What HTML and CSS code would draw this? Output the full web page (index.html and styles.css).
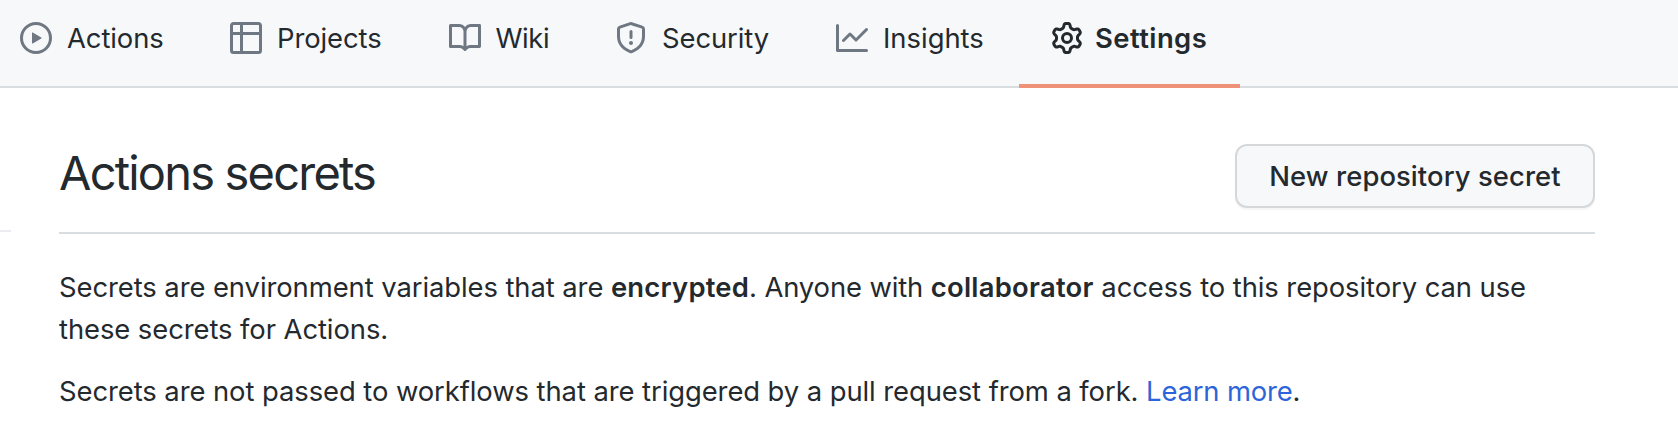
FILE: index.html
```html
<!DOCTYPE html>
<html lang="en">
<head>
<meta charset="utf-8">
<title>Actions secrets</title>
<link rel="stylesheet" href="styles.css">
</head>
<body>
<nav class="tabs">
  <a class="tab tab-actions"><svg class="icon" viewBox="0 0 16 16"><path fill-rule="evenodd" d="M1.5 8a6.5 6.5 0 1113 0 6.5 6.5 0 01-13 0zM8 0a8 8 0 100 16A8 8 0 008 0zM6.379 5.227A.25.25 0 006 5.442v5.117a.25.25 0 00.379.214l4.264-2.559a.25.25 0 000-.428L6.379 5.227z"/></svg><span>Actions</span></a>
  <a class="tab tab-projects"><svg class="icon" viewBox="0 0 16 16"><path fill-rule="evenodd" d="M0 1.75C0 .784.784 0 1.75 0h12.5C15.216 0 16 .784 16 1.75v12.5A1.75 1.75 0 0114.25 16H1.75A1.75 1.75 0 010 14.25V1.75zM1.5 6.5v7.75c0 .138.112.25.25.25H5v-8H1.500zM5 5H1.500V1.750a.25.25 0 01.25-.25H5V5zm1.500 1.500v8h7.750a.25.25 0 00.25-.25V6.500h-8zm8-1.500h-8V1.500h7.750a.25.25 0 01.25.25V5z"/></svg><span>Projects</span></a>
  <a class="tab tab-wiki"><svg class="icon" viewBox="0 0 16 16"><path fill-rule="evenodd" d="M0 1.75A.75.75 0 01.75 1h4.253c1.227 0 2.317.59 3 1.501A3.744 3.744 0 0111.006 1h4.245a.75.75 0 01.75.75v10.500a.75.75 0 01-.75.75h-4.507a2.250 2.250 0 00-1.591.659l-.622.621a.75.75 0 01-1.060 0l-.622-.621A2.250 2.250 0 005.258 13H.75a.75.75 0 01-.75-.75V1.750zm8.755 3a2.250 2.250 0 012.250-2.250H14.500v9h-3.757c-.71 0-1.400.201-1.992.572l.004-7.322zm-1.504 7.324l.004-5.073-.002-2.253A2.250 2.250 0 005.003 2.500H1.500v9h3.757a3.750 3.750 0 011.994.574z"/></svg><span>Wiki</span></a>
  <a class="tab tab-security"><svg class="icon" viewBox="0 0 16 16"><path fill-rule="evenodd" d="M7.467.133a1.750 1.750 0 011.066 0l5.250 1.680A1.750 1.750 0 0115 3.480V7c0 1.566-.32 3.182-1.303 4.682-.983 1.498-2.585 2.813-5.032 3.855a1.700 1.700 0 01-1.330 0c-2.447-1.042-4.049-2.357-5.032-3.855C1.320 10.182 1 8.566 1 7V3.480a1.750 1.750 0 011.217-1.667l5.250-1.680zm.61 1.429a.25.25 0 00-.153 0l-5.250 1.680a.25.25 0 00-.174.238V7c0 1.358.275 2.666 1.057 3.860.784 1.194 2.121 2.340 4.366 3.297a.2.2 0 00.154 0c2.245-.956 3.582-2.104 4.366-3.298C13.225 9.666 13.500 8.360 13.500 7V3.480a.25.25 0 00-.174-.237l-5.250-1.680zM9 10.500a1 1 0 11-2 0 1 1 0 012 0zm-.25-5.750a.75.75 0 10-1.500 0v3a.75.75 0 001.500 0v-3z"/></svg><span>Security</span></a>
  <a class="tab tab-insights"><svg class="icon" viewBox="0 0 16 16"><path fill-rule="evenodd" d="M1.500 1.750a.75.75 0 00-1.500 0v12.500c0 .414.336.75.75.75h14.500a.75.75 0 000-1.500H1.500V1.750zm14.280 2.530a.75.75 0 00-1.060-1.060L10 7.940 7.530 5.470a.75.75 0 00-1.060 0L3.220 8.720a.75.75 0 001.060 1.060L7 7.060l2.470 2.470a.75.75 0 001.060 0l5.250-5.250z"/></svg><span>Insights</span></a>
  <a class="tab tab-settings selected"><svg class="icon" viewBox="0 0 16 16"><path fill-rule="evenodd" d="M7.429 1.525a6.593 6.593 0 011.142 0c.036.003.108.036.137.146l.289 1.105c.147.56.55.967.997 1.189.174.086.341.183.501.290.417.278.97.423 1.530.270l1.102-.303c.11-.03.175.016.195.046.219.310.410.641.573.989.014.031.022.110-.059.190l-.815.806c-.411.406-.562.957-.530 1.456a4.588 4.588 0 010 .582c-.032.499.119 1.050.530 1.456l.815.806c.080.080.073.159.059.190a6.494 6.494 0 01-.573.990c-.020.029-.086.074-.195.045l-1.103-.303c-.559-.153-1.112-.008-1.529.270-.160.107-.327.204-.500.290-.449.222-.851.628-.998 1.189l-.289 1.105c-.029.110-.101.143-.137.146a6.613 6.613 0 01-1.142 0c-.036-.003-.108-.037-.137-.146l-.289-1.105c-.147-.560-.550-.967-.997-1.189a4.502 4.502 0 01-.501-.290c-.417-.278-.970-.423-1.530-.270l-1.102.303c-.110.030-.175-.016-.195-.046a6.492 6.492 0 01-.573-.989c-.014-.031-.022-.110.059-.190l.815-.806c.411-.406.562-.957.530-1.456a4.587 4.587 0 010-.582c.032-.499-.119-1.050-.530-1.456l-.815-.806c-.080-.080-.073-.159-.059-.190a6.440 6.440 0 01.573-.990c.020-.029.086-.075.195-.045l1.103.303c.559.153 1.112.008 1.529-.270.160-.107.327-.204.500-.290.449-.222.851-.628.998-1.189l.289-1.105c.029-.110.101-.143.137-.146zM8 0c-.236 0-.470.010-.701.030-.743.065-1.290.615-1.458 1.261l-.290 1.106c-.017.066-.078.158-.211.224a5.994 5.994 0 00-.668.386c-.123.082-.233.090-.300.071L3.270 2.776c-.644-.177-1.392.020-1.820.630a7.977 7.977 0 00-.704 1.217c-.315.675-.111 1.422.363 1.891l.815.806c.050.048.098.147.088.294a6.084 6.084 0 000 .772c.010.147-.038.246-.088.294l-.815.806c-.474.469-.678 1.216-.363 1.891.200.428.436.835.704 1.218.428.609 1.176.806 1.820.630l1.103-.303c.066-.019.176-.011.299.071.213.143.436.272.668.386.133.066.194.158.212.224l.289 1.106c.169.646.715 1.196 1.458 1.260a8.094 8.094 0 001.402 0c.743-.064 1.290-.614 1.458-1.260l.290-1.106c.017-.066.078-.158.211-.224a5.980 5.980 0 00.668-.386c.123-.082.233-.090.300-.071l1.102.302c.644.177 1.392-.020 1.820-.630.268-.382.505-.789.704-1.217.315-.675.111-1.422-.364-1.891l-.814-.806c-.050-.048-.098-.147-.088-.294a6.100 6.100 0 000-.772c-.010-.147.039-.246.088-.294l.814-.806c.475-.469.679-1.216.364-1.891a7.992 7.992 0 00-.704-1.218c-.428-.609-1.176-.806-1.820-.630l-1.103.303c-.066.019-.176.011-.299-.071a5.991 5.991 0 00-.668-.386c-.133-.066-.194-.158-.212-.224L10.160 1.290C9.990.645 9.444.095 8.701.031A8.094 8.094 0 008 0zm1.500 8a1.500 1.500 0 11-3 0 1.500 1.500 0 013 0zM11 8a3 3 0 11-6 0 3 3 0 016 0z"/></svg><span>Settings</span></a>
</nav>
<main class="page">
  <div class="side"></div>
  <section class="content">
    <header class="subhead">
      <h2 class="title">Actions secrets</h2>
      <button class="btn">New repository secret</button>
    </header>
    <p class="para">Secrets are environment variables that are <strong class="encrypted">encrypted</strong><span class="middle">. Anyone with </span><strong class="collaborator">collaborator</strong> access to this repository can use<br>these secrets for Actions.</p>
    <p class="para">Secrets are not passed to workflows that are triggered by a pull request from a fork. <a class="link">Learn more</a>.</p>
  </section>
</main>
</body>
</html>
```
FILE: styles.css
```css
* { box-sizing: border-box; }
body {
  margin: 0;
  height: 446px;
  overflow: hidden;
  background: #fff;
  color: #24292e;
  font: 27.4px/42px Inter, sans-serif;
}
.tabs {
  display: flex;
  height: 88px;
  background: #f6f8fa;
  box-shadow: inset 0 -2px #d8dde2;
}
.tab {
  display: flex;
  align-items: center;
  gap: 15px;
  padding: 0 0 12px 32px;
  flex: none;
  letter-spacing: -.08px;
}
.tab-actions { width: 210px; margin-left: -12px; }
.tab-projects { width: 219px; }
.tab-wiki { width: 166px; gap: 14.5px; letter-spacing: -.4px; }
.tab-security { width: 221px; }
.tab-insights { width: 215px; letter-spacing: 0; }
.tab-settings { width: 221px; gap: 12px; letter-spacing: .45px; }
.selected { font-weight: 600; box-shadow: inset 0 -4px #f0927a; }
.icon { width: 32px; height: 32px; fill: #6f7782; flex: none; }
.selected .icon { fill: #24292e; }
.page { display: flex; gap: 48px; }
.side { width: 11px; height: 144px; border-bottom: 2px solid #eaecef; }
.content { width: 1536px; padding-top: 56px; }
.subhead {
  display: flex;
  justify-content: space-between;
  align-items: flex-start;
  height: 90px;
  border-bottom: 2px solid #d8dde2;
  margin-bottom: 32px;
}
.title {
  margin: 0;
  font-size: 47px;
  font-weight: 430;
  line-height: 58px;
  letter-spacing: -1.8px;
}
.btn {
  width: 360px;
  height: 64px;
  padding: 0;
  border: 2px solid #d5d8da;
  border-radius: 12px;
  background: #f6f8fa;
  box-shadow: 0 2px 0 rgba(27, 31, 35, .04);
  color: #24292e;
  font: 500 27.4px/40px Inter, sans-serif;
  letter-spacing: .09px;
}
.para { margin: 0 0 20px; white-space: nowrap; letter-spacing: -.068px; }
.para strong { font-weight: 600; }
.encrypted { letter-spacing: .22px; }
.middle { letter-spacing: -.12px; }
.collaborator { letter-spacing: .27px; }
.link { color: #2c65d9; letter-spacing: -.15px; }
```
